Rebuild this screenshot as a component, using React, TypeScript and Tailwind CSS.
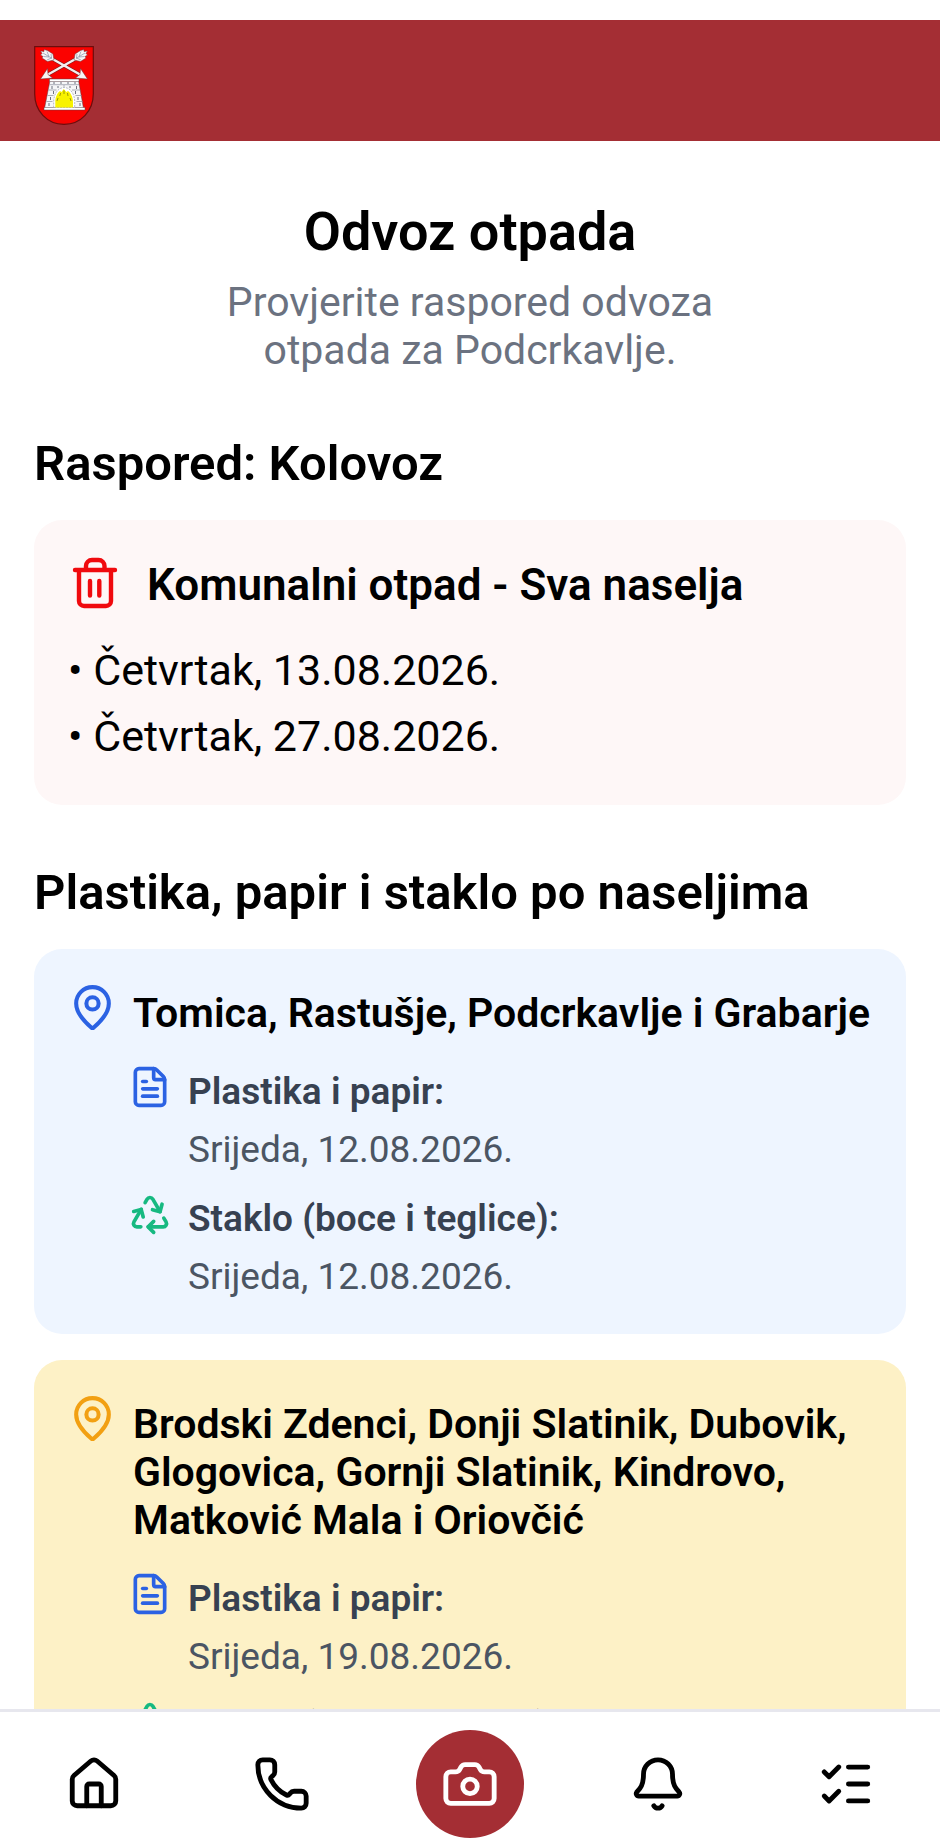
import React from "react";
import { Bell, Camera, FileText, House, ListChecks, MapPin, Phone, Recycle } from "lucide-react";

function Crest() {
  return (
    <svg viewBox="0 0 60 79" className="h-[79px] w-[60px]" role="img" aria-label="Grb općine Podcrkavlje">
      <path d="M.7.7h58.6v47c0 17-12 30.600-29.300 30.600S.7 64.700.7 47.700z" fill="#fb0200" stroke="#6d0d0d" strokeWidth="1.200" />
      <path d="M15 11 46 28.500M45 11 14 28.500" stroke="#7a1a1a" strokeWidth="3.400" />
      <path d="M15 11 46 28.500M45 11 14 28.500" stroke="#f5eded" strokeWidth="2.400" />
      <g fill="#f7f5f5" stroke="#6b3038" strokeWidth=".5" strokeLinejoin="round">
        <path d="M53.500 33 41.500 32l4.500-3.500.5-6z" />
        <path d="M6.500 33 18.500 32 14 28.500l-.5-6z" />
        <path d="m6.500 5 3.500.5V3.500l3.500 1 5.500 3.500 1 6-6.500 1.500L8 12l1-1.500-2.500-1.500 1.500-1.500z" />
        <path d="m53.500 5-3.500.5V3.500l-3.500 1L41 8l-1 6 6.500 1.500L52 12l-1-1.500 2.500-1.500-1.500-1.500z" />
      </g>
      <path d="m9 7 9 5.500M13 5.500l2 5M9.500 10.500l5.500.5M17 8l.5 4M13 14l4.500-2M51 7l-9 5.500M47 5.500l-2 5M50.500 10.500 45 11M43 8l-.5 4M47 14l-4.500-2" stroke="#8790a8" strokeWidth=".7" />
      <path d="M16 34.500h28.500l5 28h-39z" fill="#f6f6f8" stroke="#5b4148" strokeWidth=".5" />
      <path d="M15.500 33h29.500v2.500H15.500zM10 61.500h41V64H10z" fill="#fff" stroke="#5b4148" strokeWidth=".5" />
      <path d="M15.500 38.700h29.500M14.500 44h8M38 44h8M13.500 49.500h6M41.500 49.500h6M12.500 55.500h6M42.500 55.500h6" stroke="#8a8e9c" strokeWidth=".7" />
      <path d="M20 36v2M27 36v2M34 36v2M41 36v2M18 40v3M24 40v2M30 39.500v1M36 40v2M42.500 40v3M19.500 45v3M41.500 45v3M16.500 51v3M44 51v3M15 57v3M46 57v3" stroke="#4c5060" strokeWidth=".8" />
      <path d="M19.700 61.500V56c0-8.500 4.700-14.500 10.500-14.500S40.700 47.500 40.700 56v5.500z" fill="#fff" stroke="#8d92a0" strokeWidth=".6" strokeDasharray="2 1" />
      <path d="M21.300 61.500V56c0-5 2-9 4.700-11l1.500 1 2.300-3 2.500 3 1.700-1c2.700 2 5 6 5 11v5.500z" fill="#f8f200" />
      <path d="m23 55 1-3M25.800 50l.8-3M30 48v-3.500M34 50l-.5-3M37 55l-1-3" stroke="#77700b" strokeWidth=".7" />
    </svg>
  );
}

function TrashIcon() {
  return (
    <svg
      viewBox="0 0 52 58"
      className="h-[58px] w-[52px] shrink-0 text-[#f00a0e]"
      fill="none"
      stroke="currentColor"
      strokeWidth="4.400"
      strokeLinecap="round"
      strokeLinejoin="round"
      aria-hidden="true"
    >
      <path d="M7 14h40M18 14v-4a6 6 0 0 1 6-6h6.500a6 6 0 0 1 6 6v4M11 14v31a5 5 0 0 0 5 5h22a5 5 0 0 0 5-5V14M22 25v14.500M31.300 25v14.500" />
    </svg>
  );
}

type Zone = { places: string; card: string; pin: string; date: string };

const zones: Zone[] = [
  {
    places: "Tomica, Rastušje, Podcrkavlje i Grabarje",
    card: "bg-[#eef5ff]",
    pin: "text-[#2b62e3]",
    date: "Srijeda, 12.08.2026.",
  },
  {
    places: "Brodski Zdenci, Donji Slatinik, Dubovik, Glogovica, Gornji Slatinik, Kindrovo, Matković Mala i Oriovčić",
    card: "bg-[#fdf1c6]",
    pin: "text-[#f2a012]",
    date: "Srijeda, 19.08.2026.",
  },
];

function Pickup({ icon, label, date }: { icon: React.ReactNode; label: string; date: string }) {
  return (
    <li className="flex items-start gap-4">
      <span className="mt-0.5 shrink-0">{icon}</span>
      <div className="text-[37px] leading-[58px]">
        <h4 className="font-semibold text-[#374151]">{label}</h4>
        <p className="text-[#4b5563]">{date}</p>
      </div>
    </li>
  );
}

function ZoneCard({ zone }: { zone: Zone }) {
  return (
    <article className={`rounded-[28px] px-[34px] pt-[34px] pb-7 ${zone.card}`}>
      <div className="flex items-start gap-4">
        <MapPin size={49} className={`shrink-0 ${zone.pin}`} aria-hidden="true" />
        <h3 className="pt-1.5 text-[41px] leading-[48px] font-semibold">{zone.places}</h3>
      </div>
      <ul className="mt-[26px] flex flex-col gap-[11px] pl-[60px]">
        <Pickup icon={<FileText size={44} className="text-[#2b62e3]" />} label="Plastika i papir:" date={zone.date} />
        <Pickup icon={<Recycle size={44} className="text-[#16b981]" />} label="Staklo (boce i teglice):" date={zone.date} />
      </ul>
    </article>
  );
}

export default function App() {
  return (
    <div className="flex h-screen flex-col bg-white pt-5 font-[Roboto,sans-serif] text-black">
      <header className="shrink-0 bg-[#a42e34] px-[34px] pt-[26px] pb-4">
        <Crest />
      </header>

      <main className="min-h-0 flex-1 overflow-hidden px-[34px] pt-[59px]">
        <div className="text-center">
          <h1 className="text-[54px] leading-[64px] font-semibold">Odvoz otpada</h1>
          <p className="mx-auto mt-[14px] max-w-[560px] text-[41px] leading-[48px] text-[#6b7280]">
            Provjerite raspored odvoza otpada za Podcrkavlje.
          </p>
        </div>

        <section className="mt-[62px]">
          <h2 className="text-[49px] leading-[56px] font-semibold">Raspored: Kolovoz</h2>
          <article className="mt-7 rounded-[28px] bg-[#fef7f7] px-[34px] py-9">
            <div className="flex items-center gap-[27px]">
              <TrashIcon />
              <h3 className="text-[44px] leading-[58px] font-semibold">Komunalni otpad - Sva naselja</h3>
            </div>
            <ul className="mt-[23px] text-[43px] leading-[66px]">
              <li>• Četvrtak, 13.08.2026.</li>
              <li>• Četvrtak, 27.08.2026.</li>
            </ul>
          </article>
        </section>

        <section className="mt-[60px]">
          <h2 className="text-[49px] leading-[56px] font-semibold">Plastika, papir i staklo po naseljima</h2>
          <div className="mt-7 flex flex-col gap-[26px]">
            {zones.map((zone) => (
              <ZoneCard key={zone.places} zone={zone} />
            ))}
          </div>
        </section>
      </main>

      <nav className="grid shrink-0 grid-cols-5 place-items-center border-t-[3px] border-[#e7e7ee] bg-white pt-[18px] pb-px" aria-label="Glavna navigacija">
        <button type="button" aria-label="Početna">
          <House size={58} />
        </button>
        <button type="button" aria-label="Telefon">
          <Phone size={58} />
        </button>
        <button type="button" aria-label="Kamera" className="grid size-[108px] place-items-center rounded-full bg-[#a42e34] text-white">
          <Camera size={58} />
        </button>
        <button type="button" aria-label="Obavijesti">
          <Bell size={58} />
        </button>
        <button type="button" aria-label="Popis">
          <ListChecks size={58} />
        </button>
      </nav>
    </div>
  );
}
